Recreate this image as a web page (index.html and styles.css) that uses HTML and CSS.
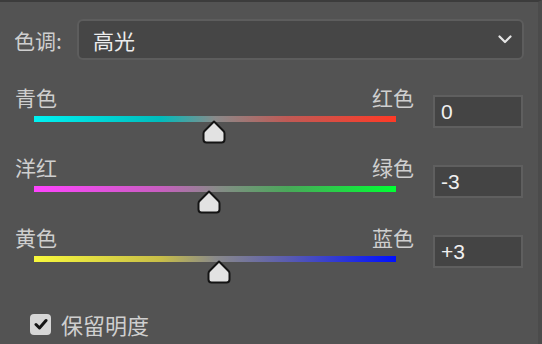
FILE: index.html
```html
<!DOCTYPE html>
<html lang="zh">
<head>
<meta charset="utf-8">
<link rel="stylesheet" href="styles.css">
</head>
<body>
<div class="panel">
  <div class="tone">
    <span class="tone-label">色调:</span>
    <div class="select">
      <span>高光</span>
      <svg class="chev" width="14" height="9" viewBox="0 0 14 9"><path d="M1.5 1.5 L7 7 L12.5 1.5" fill="none" stroke="#e6e6e6" stroke-width="2.2" stroke-linecap="round" stroke-linejoin="round"/></svg>
    </div>
  </div>

  <div class="rows">
    <div class="row">
      <div class="slider">
        <div class="labels"><span>青色</span><span>红色</span></div>
        <div class="track cr">
          <svg class="thumb" style="left: calc(50% - 1px)" width="24" height="24" viewBox="0 0 24 24"><path d="M12 1.5 L21.5 11 Q22.5 12 22.5 13.5 V19.5 Q22.5 22.5 19.5 22.5 H4.5 Q1.5 22.5 1.5 19.5 V13.5 Q1.5 12 2.5 11 Z" fill="#e2e2e2" stroke="#141414" stroke-width="2" stroke-linejoin="round"/></svg>
        </div>
      </div>
      <div class="num">0</div>
    </div>

    <div class="row">
      <div class="slider">
        <div class="labels"><span>洋红</span><span>绿色</span></div>
        <div class="track mg">
          <svg class="thumb" style="left: calc(48.5% - 1px)" width="24" height="24" viewBox="0 0 24 24"><path d="M12 1.5 L21.5 11 Q22.5 12 22.5 13.5 V19.5 Q22.5 22.5 19.5 22.5 H4.5 Q1.5 22.5 1.5 19.5 V13.5 Q1.5 12 2.5 11 Z" fill="#e2e2e2" stroke="#141414" stroke-width="2" stroke-linejoin="round"/></svg>
        </div>
      </div>
      <div class="num">-3</div>
    </div>

    <div class="row">
      <div class="slider">
        <div class="labels"><span>黄色</span><span>蓝色</span></div>
        <div class="track yb">
          <svg class="thumb" style="left: calc(51.5% - 1px)" width="24" height="24" viewBox="0 0 24 24"><path d="M12 1.5 L21.5 11 Q22.5 12 22.5 13.5 V19.5 Q22.5 22.5 19.5 22.5 H4.5 Q1.5 22.5 1.5 19.5 V13.5 Q1.5 12 2.5 11 Z" fill="#e2e2e2" stroke="#141414" stroke-width="2" stroke-linejoin="round"/></svg>
        </div>
      </div>
      <div class="num">+3</div>
    </div>
  </div>

  <label class="check">
    <span class="box"><svg width="14" height="12" viewBox="0 0 14 12"><path d="M2 6.5 L5.5 10 L12 2.5" fill="none" stroke="#151515" stroke-width="3" stroke-linecap="round" stroke-linejoin="round"/></svg></span>
    <span>保留明度</span>
  </label>
</div>
</body>
</html>
```

FILE: styles.css
```css
html, body {
  margin: 0;
  padding: 0;
}
body {
  width: 542px;
  height: 344px;
  overflow: hidden;
  background: #535353;
  font-family: "Noto Sans CJK SC", "Noto Sans", sans-serif;
  color: #cfcfcf;
}
.panel {
  box-sizing: border-box;
  height: 344px;
  border-top: 2px solid #3c3c3c;
  border-right: 4px solid #4b4b4b;
  padding: 17px 0 0 14px;
}
.tone {
  display: flex;
  align-items: center;
}
.tone-label {
  width: 63px;
  font-size: 21px;
  line-height: 24px;
}
.select {
  box-sizing: border-box;
  width: 447px;
  height: 41px;
  border: 2px solid #5d5d5d;
  border-radius: 6px;
  background: #464646;
  padding: 0 10px 0 14px;
  display: flex;
  align-items: center;
  justify-content: space-between;
  font-size: 21px;
  color: #ececec;
}
.chev {
  display: block;
}
.rows {
  margin-top: 26px;
  padding-left: 1px;
}
.row {
  display: grid;
  grid-template-columns: 399px 90px;
  column-gap: 19px;
  height: 70px;
}
.labels {
  display: flex;
  justify-content: space-between;
  font-size: 21px;
  line-height: 22px;
}
.track {
  position: relative;
  margin: 8px 18px 0 19px;
  height: 6px;
}
.cr { background: linear-gradient(to right, #00f2f2, #00bcbc 35%, #8a8a8a 50%, #c05a55 70%, #ff3a26); }
.mg { background: linear-gradient(to right, #ff44ff, #c85ec0 35%, #8a8a8a 50%, #4aa85a 70%, #00ff33); }
.yb { background: linear-gradient(to right, #f8f83c, #c8be48 35%, #8a8a8a 50%, #5a5cb0 70%, #0010ff); }
.thumb {
  position: absolute;
  top: 4px;
  transform: translateX(-50%);
  display: block;
}
.num {
  box-sizing: border-box;
  margin-top: 9px;
  height: 33px;
  border: 2px solid #5f5f5f;
  background: #444444;
  color: #f0f0f0;
  font-family: "Liberation Sans", Arial, sans-serif;
  font-size: 21px;
  padding-left: 6px;
  display: flex;
  align-items: center;
}
.check {
  display: flex;
  align-items: center;
  gap: 10px;
  margin: 17px 0 0 16px;
  font-size: 22px;
  line-height: 22px;
}
.box {
  width: 21px;
  height: 21px;
  border-radius: 4px;
  background: #d6d6d6;
  display: flex;
  align-items: center;
  justify-content: center;
}
.box svg { display: block; }
```
